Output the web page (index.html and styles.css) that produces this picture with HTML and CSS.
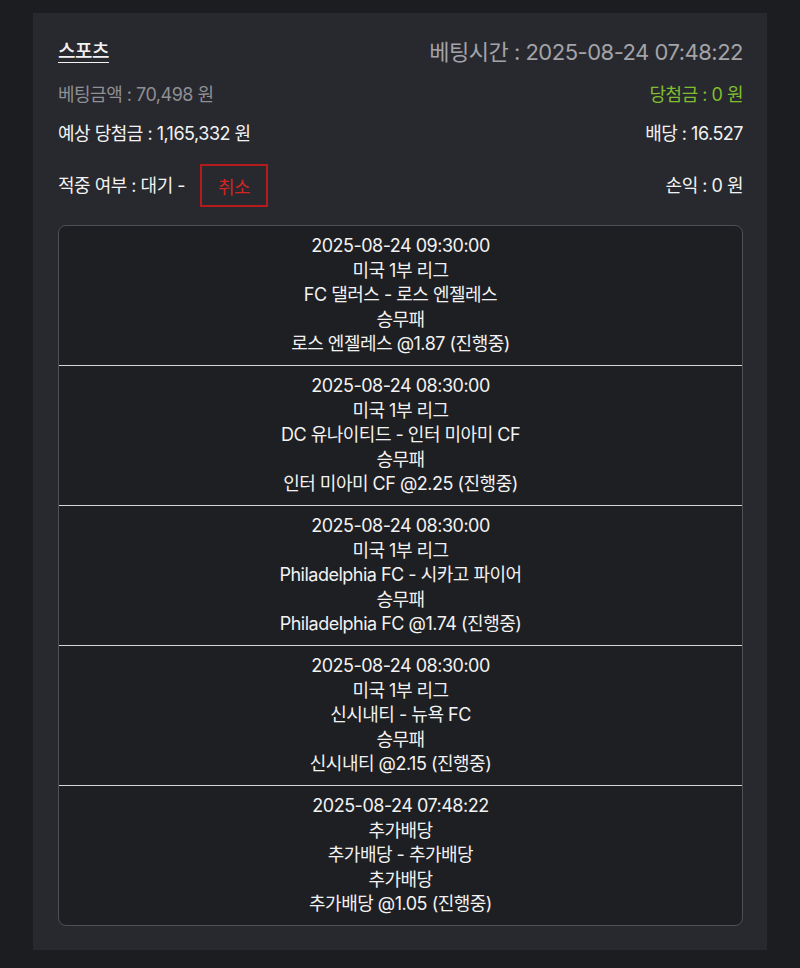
FILE: index.html
```html
<!DOCTYPE html>
<html lang="ko">
<head>
<meta charset="utf-8">
<link rel="stylesheet" href="styles.css">
</head>
<body>
<div class="page">
  <div class="card">
    <div class="row head">
      <span class="title">스포츠</span>
      <span class="time">베팅시간 : 2025-08-24 07:48:22</span>
    </div>
    <div class="row r2">
      <span class="muted">베팅금액 : 70,498 원</span>
      <span class="green">당첨금 : 0 원</span>
    </div>
    <div class="row r3">
      <span>예상 당첨금 : 1,165,332 원</span>
      <span>배당 : 16.527</span>
    </div>
    <div class="row r4">
      <span class="status">적중 여부 : 대기 - <button class="cancel">취소</button></span>
      <span>손익 : 0 원</span>
    </div>
    <div class="list">
      <div class="item">
        <div>2025-08-24 09:30:00</div>
        <div>미국 1부 리그</div>
        <div>FC 댈러스 - 로스 엔젤레스</div>
        <div>승무패</div>
        <div>로스 엔젤레스 @1.87 (진행중)</div>
      </div>
      <div class="item">
        <div>2025-08-24 08:30:00</div>
        <div>미국 1부 리그</div>
        <div>DC 유나이티드 - 인터 미아미 CF</div>
        <div>승무패</div>
        <div>인터 미아미 CF @2.25 (진행중)</div>
      </div>
      <div class="item">
        <div>2025-08-24 08:30:00</div>
        <div>미국 1부 리그</div>
        <div>Philadelphia FC - 시카고 파이어</div>
        <div>승무패</div>
        <div>Philadelphia FC @1.74 (진행중)</div>
      </div>
      <div class="item">
        <div>2025-08-24 08:30:00</div>
        <div>미국 1부 리그</div>
        <div>신시내티 - 뉴욕 FC</div>
        <div>승무패</div>
        <div>신시내티 @2.15 (진행중)</div>
      </div>
      <div class="item">
        <div>2025-08-24 07:48:22</div>
        <div>추가배당</div>
        <div>추가배당 - 추가배당</div>
        <div>추가배당</div>
        <div>추가배당 @1.05 (진행중)</div>
      </div>
    </div>
  </div>
</div>
</body>
</html>
```
FILE: styles.css
```css
html, body {
  margin: 0;
  padding: 0;
  background: #1c1d21;
}
body {
  font-family: "Inter", "Noto Sans CJK KR", sans-serif;
  color: #f2f2f2;
  font-size: 18px;
  letter-spacing: -0.5px;
}
.page {
  padding: 13px 33px 19px;
}
.card {
  background: #28292e;
  padding: 25px 24px 24px 25px;
}
.row {
  display: flex;
  justify-content: space-between;
  align-items: center;
  line-height: 24px;
}
.head {
  line-height: 28px;
}
.title {
  text-decoration: underline;
  text-underline-offset: 4px;
  font-weight: 500;
  font-size: 19px;
}
.time {
  font-size: 22px;
  color: #a3a3a8;
}
.r2 {
  margin-top: 17px;
}
.muted {
  color: #8f8f94;
}
.green {
  color: #80bd2f;
}
.r3 {
  margin-top: 15px;
}
.r4 {
  margin-top: 18px;
}
.status {
  display: flex;
  align-items: center;
}
.cancel {
  margin-left: 15px;
  width: 68px;
  height: 43px;
  background: transparent;
  border: 2px solid #b51b1b;
  color: #d42424;
  font-family: inherit;
  font-size: 18px;
  letter-spacing: -0.5px;
  padding: 0;
}
.list {
  margin-top: 18px;
  background: #1e1f23;
  border: 1px solid #4e4f54;
  border-radius: 8px;
  overflow: hidden;
}
.item {
  text-align: center;
  line-height: 24.5px;
  padding: 8px 0 8.5px;
  border-top: 1px solid #d6d6d6;
}
.item:first-child {
  border-top: none;
}
```
